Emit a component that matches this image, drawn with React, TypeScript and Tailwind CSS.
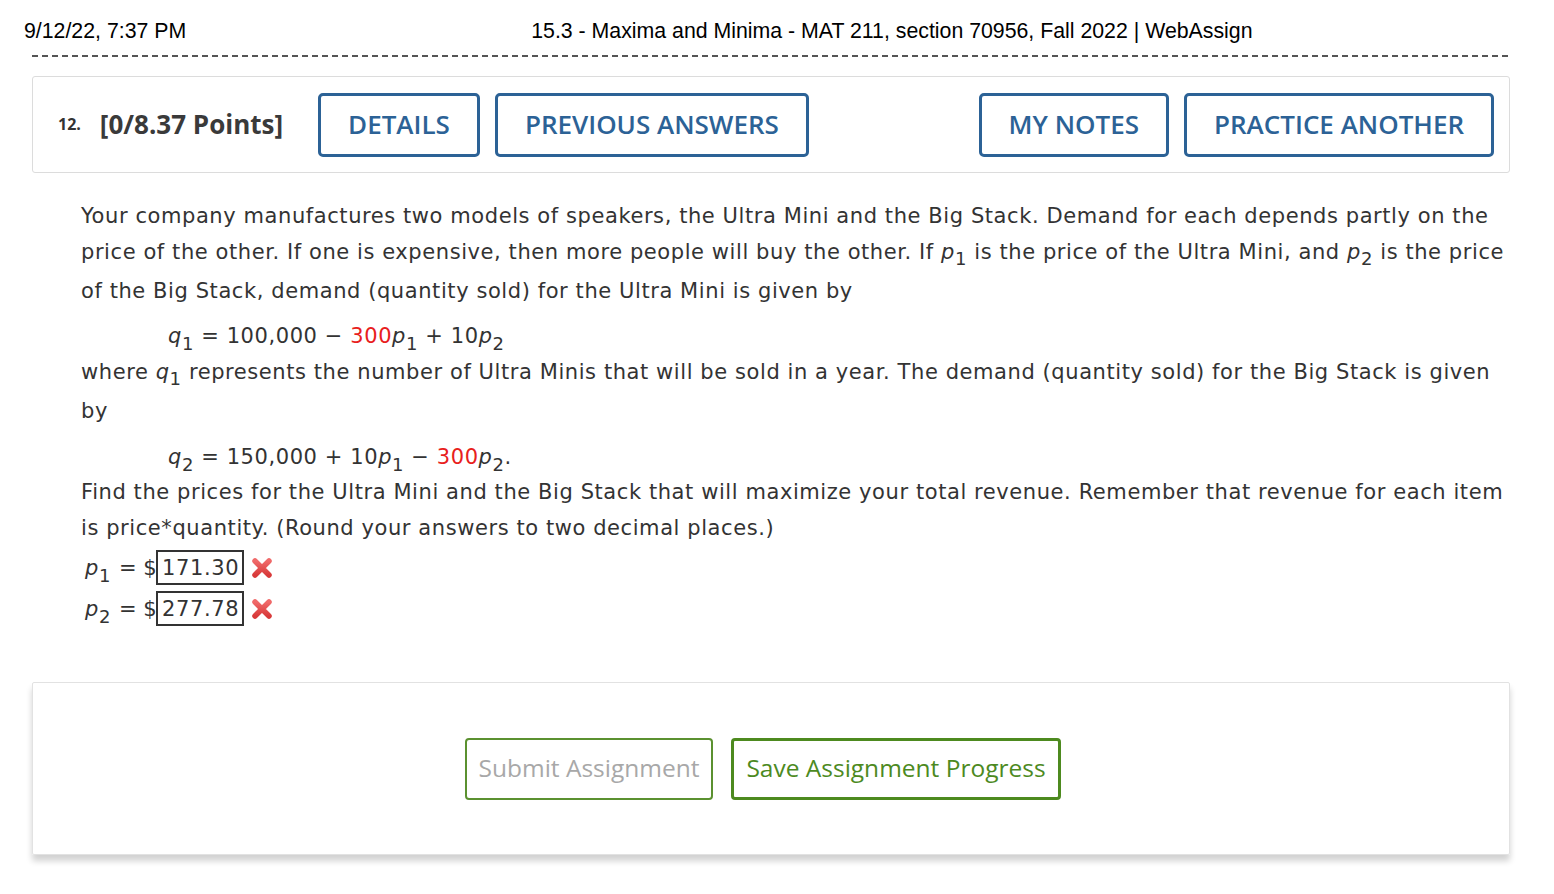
import React from "react";

const body = { fontFamily: '"DejaVu Sans", Verdana, sans-serif' };
const open = { fontFamily: '"Open Sans", sans-serif' };

// inline subscripts push the line below down a little, as in the original page
const V = ({ n, s, inline = false }: { n: string; s: string; inline?: boolean }) => (
  <span className="whitespace-nowrap">
    <i>{n}</i>
    {inline ? (
      <sub className="text-[18px] not-italic static leading-[29px] align-[-6px]">{s}</sub>
    ) : (
      <sub className="text-[18px] relative top-[2px] align-sub not-italic">{s}</sub>
    )}
  </span>
);

const WrongMark = () => (
  <svg width="24" height="24" viewBox="0 0 24 24" className="ml-[6px]">
    <defs>
      <linearGradient id="xg" x1="0" y1="0" x2="0" y2="1">
        <stop offset="0" stopColor="#f06a6a" />
        <stop offset="1" stopColor="#d83a3a" />
      </linearGradient>
    </defs>
    <path d="M5 5 L19 19 M19 5 L5 19" stroke="url(#xg)" strokeWidth="5.5" strokeLinecap="round" />
  </svg>
);

const BlueButton = ({ label }: { label: string }) => (
  <button
    className="h-[64px] px-[27px] border-[3px] border-[#2c6296] rounded-[5px] text-[#2c6296] text-[26px] font-semibold bg-white"
    style={open}
  >
    {label}
  </button>
);

const AnswerRow = ({ s, value }: { s: string; value: string }) => (
  <div className="flex items-center h-[41px]">
    <span className="ml-[4px]">
      <V n="p" s={s} />
    </span>
    <span className="ml-[8px]">=</span>
    <span className="ml-[6px]">$</span>
    <span className="border-2 border-[#333] h-[35px] w-[88px] flex items-center pl-[4px] ml-[-1px]">
      {value}
    </span>
    <WrongMark />
  </div>
);

export default function App() {
  return (
    <div className="w-[1554px] h-[894px] bg-white overflow-hidden">
      <div
        className="flex items-center h-[24px] pl-[24px] mt-[20px] text-[21.3px] text-black"
        style={{ fontFamily: '"Liberation Sans", Arial, sans-serif' }}
      >
        <span>9/12/22, 7:37 PM</span>
        <span className="ml-[345px]">15.3 - Maxima and Minima - MAT 211, section 70956, Fall 2022 | WebAssign</span>
      </div>
      <div className="mx-[32px] mt-[11px] w-[1478px] h-[2px] bg-[repeating-linear-gradient(to_right,#555_0_6px,transparent_6px_10px)]" />

      <div className="mx-[32px] mt-[19px] w-[1478px] h-[97px] border border-[#dcdcdc] rounded-[3px] flex items-center pl-[25px] pr-[15px]" style={open}>
        <span className="text-[16px] font-bold text-[#333] mt-[-2px]">12.</span>
        <span className="ml-[19px] text-[26px] font-bold text-[#3a3a3a]">[0/8.37 Points]</span>
        <div className="ml-[35px] flex gap-[15px]">
          <BlueButton label="DETAILS" />
          <BlueButton label="PREVIOUS ANSWERS" />
        </div>
        <div className="ml-auto flex gap-[15px]">
          <BlueButton label="MY NOTES" />
          <BlueButton label="PRACTICE ANOTHER" />
        </div>
      </div>

      <div className="pl-[81px] pr-[42px] pt-[25px] text-[21px] tracking-[0.58px] leading-[36px] text-[#333]" style={body}>
        <p>
          Your company manufactures two models of speakers, the Ultra Mini and the Big Stack. Demand for each depends partly on the
          price of the other. If one is expensive, then more people will buy the other. If <V n="p" s="1" inline /> is the price of the
          Ultra Mini, and <V n="p" s="2" inline /> is the price of the Big Stack, demand (quantity sold) for the Ultra Mini is given by
        </p>
        <div className="pl-[87px] mt-[10px] leading-[35px]">
          <V n="q" s="1" /> = 100,000 − <span className="text-[#e8201c]">300</span>
          <V n="p" s="1" /> + 10
          <V n="p" s="2" />
        </div>
        <p>
          where <V n="q" s="1" inline /> represents the number of Ultra Minis that will be sold in a year. The demand (quantity sold)
          for the Big Stack is given by
        </p>
        <div className="pl-[87px] mt-[12px] leading-[33px]">
          <V n="q" s="2" /> = 150,000 + 10
          <V n="p" s="1" /> − <span className="text-[#e8201c]">300</span>
          <V n="p" s="2" />.
        </div>
        <p className="mt-[0px]">
          Find the prices for the Ultra Mini and the Big Stack that will maximize your total revenue. Remember that revenue for each item
          is price*quantity. (Round your answers to two decimal places.)
        </p>
        <div className="mt-[1px]">
          <AnswerRow s="1" value="171.30" />
          <AnswerRow s="2" value="277.78" />
        </div>
      </div>

      <div className="mx-[32px] mt-[53px] w-[1478px] h-[173px] border border-[#e2e2e2] rounded-[2px] shadow-[0_6px_6px_rgba(0,0,0,0.18)] flex items-center justify-center gap-[18px] pr-[16px]" style={open}>
        <button className="h-[62px] w-[248px] border-2 border-[#5b9130] rounded-[4px] text-[24.5px] text-[#a8a8a8] bg-white">
          Submit Assignment
        </button>
        <button className="h-[62px] w-[330px] border-[3px] border-[#4d8a1f] rounded-[4px] text-[24.5px] text-[#4d8a1f] bg-white">
          Save Assignment Progress
        </button>
      </div>
    </div>
  );
}
